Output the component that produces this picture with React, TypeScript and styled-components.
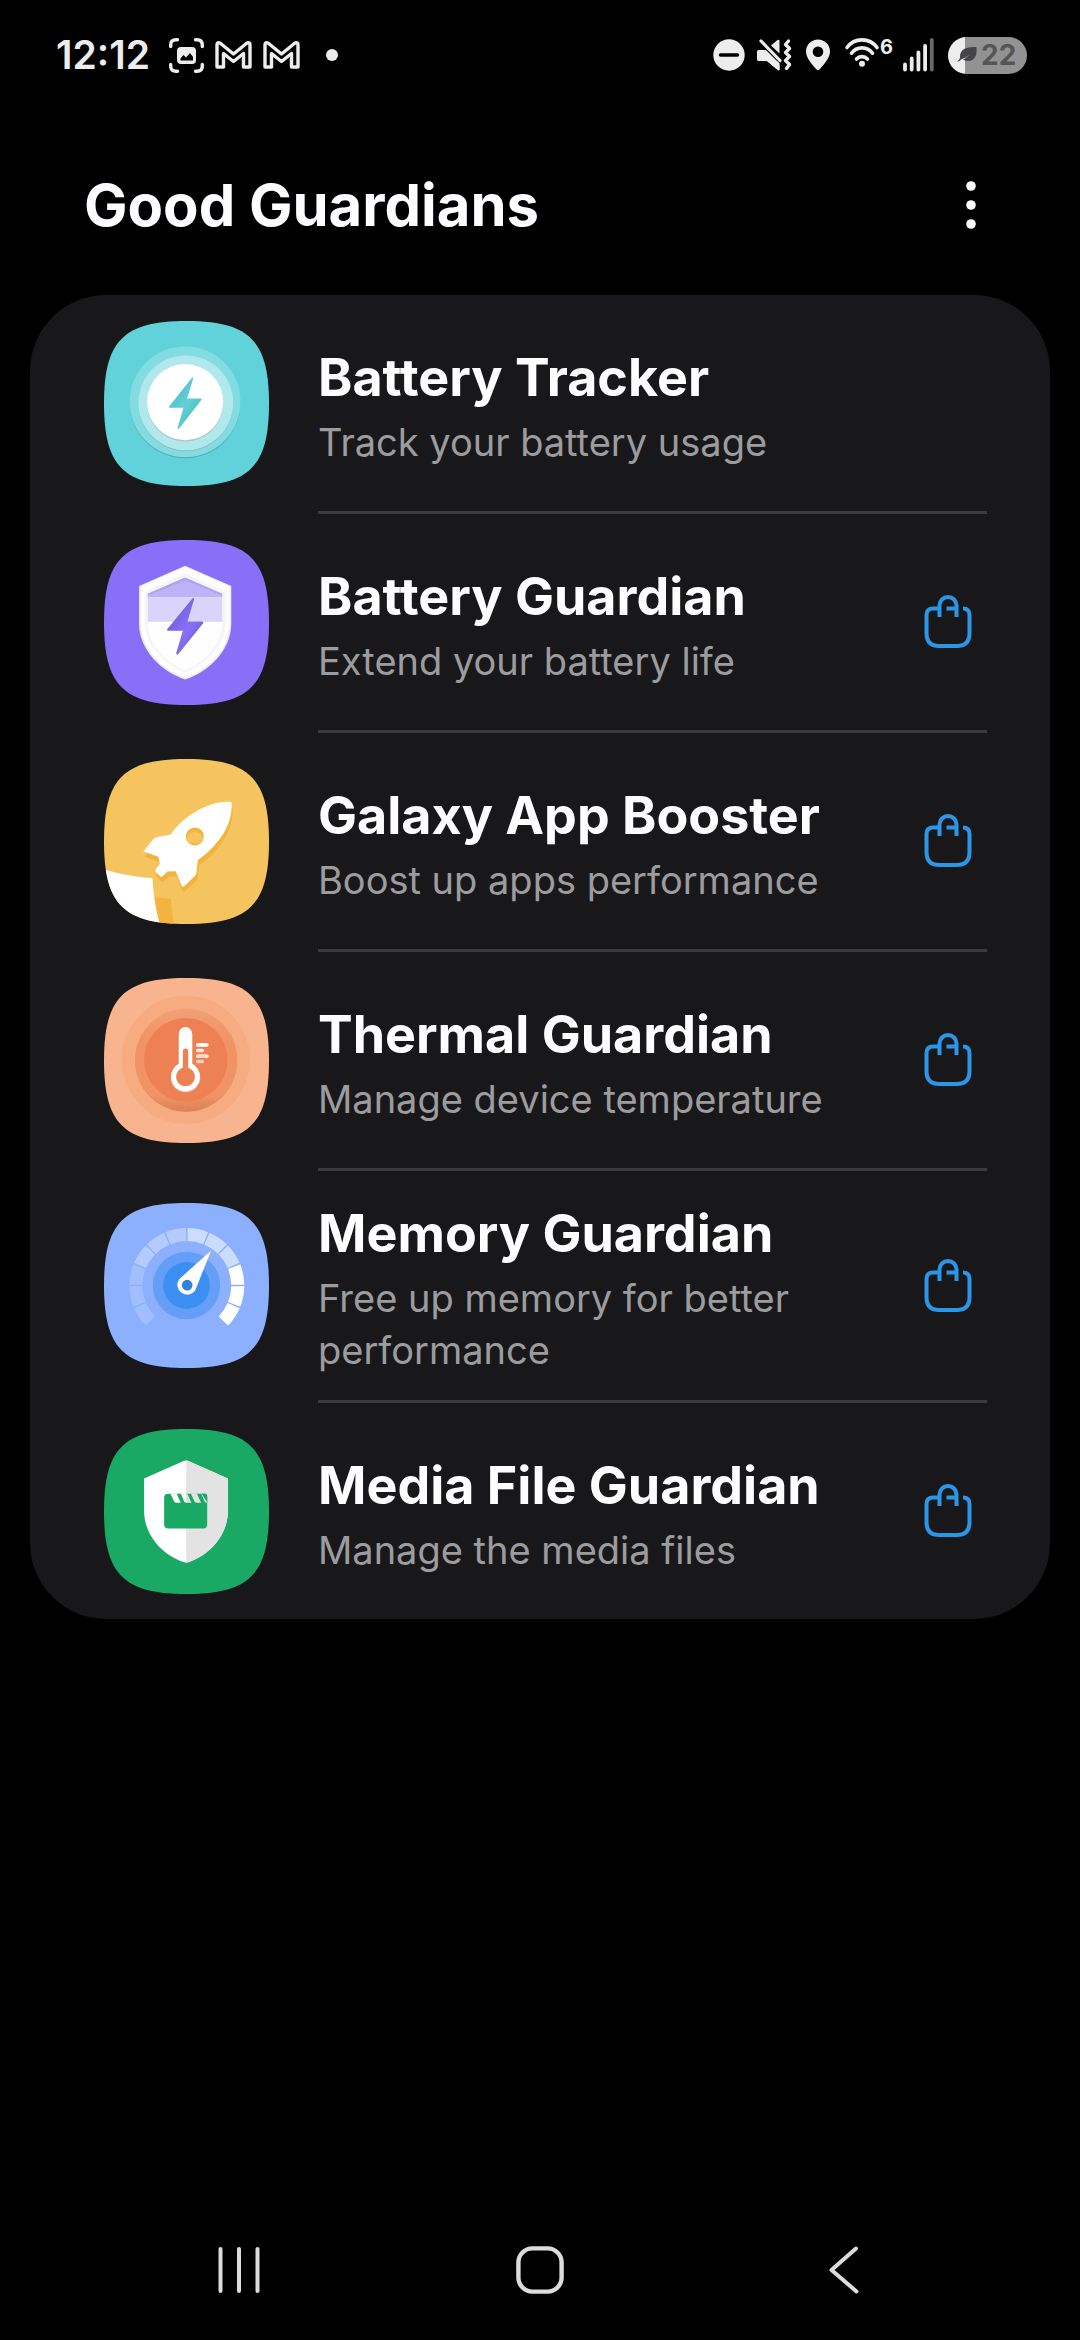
import React from "react";
import styled, { createGlobalStyle } from "styled-components";

const GlobalStyle = createGlobalStyle`
  *, *::before, *::after { box-sizing: border-box; }
  body {
    margin: 0;
    background: #000;
    color: #fdfdff;
    font-family: Inter, "Liberation Sans", sans-serif;
  }
`;

const Page = styled.div`
  min-height: 100vh;
  display: flex;
  flex-direction: column;
`;

const StatusBar = styled.div`
  height: 115px;
  padding: 0 53px 5px 56px;
  display: flex;
  align-items: center;
  justify-content: space-between;
  color: #ededed;
`;

const StatusGroup = styled.div<{ $gap: number }>`
  display: flex;
  align-items: center;
  gap: ${(p) => p.$gap}px;
`;

const Clock = styled.time`
  margin-right: 8px;
  font-size: 39px;
  line-height: 46px;
  font-weight: 600;
`;

const Glyph = styled.svg`
  display: block;
  flex: none;
  overflow: visible;
`;

const Dot = styled.span`
  width: 12px;
  height: 12px;
  margin-left: 15px;
  border-radius: 50%;
  background: currentColor;
`;

const Wifi = styled.div`
  width: 47px;
  height: 36px;
  display: flex;
  align-items: flex-start;
  gap: 2px;
`;

const WifiVersion = styled.span`
  font-size: 20px;
  line-height: 20px;
  font-weight: 700;
`;

const Battery = styled.div`
  width: 79px;
  height: 37px;
  padding-left: 9px;
  display: flex;
  align-items: center;
  gap: 4px;
  border-radius: 19px;
  background: linear-gradient(to right, #ededed 17px, #929292 17px);
  color: #555557;
  font-size: 28px;
  line-height: 37px;
  font-weight: 700;
`;

const Header = styled.header`
  height: 180px;
  padding: 0 70px 0 84px;
  display: flex;
  align-items: center;
  justify-content: space-between;
`;

const Heading = styled.h1`
  margin: 0;
  font-size: 58px;
  line-height: 78px;
  font-weight: 700;
`;

const IconButton = styled.button<{ $width: number }>`
  width: ${(p) => p.$width}px;
  height: 78px;
  padding: 0;
  flex: none;
  display: flex;
  align-items: center;
  justify-content: center;
  border: 0;
  background: none;
  color: inherit;
  cursor: pointer;
`;

const Main = styled.main`
  flex: 1;
  padding: 0 30px;
`;

const Card = styled.ul`
  margin: 0;
  padding: 0;
  list-style: none;
  border-radius: 76px;
  background: #18181a;
`;

const Row = styled.li`
  display: flex;
  align-items: stretch;
  gap: 49px;
  padding: 0 63px 0 74px;
`;

const RowIcon = styled.div<{ $last: boolean }>`
  width: 165px;
  flex: none;
  display: flex;
  align-items: center;
  padding-bottom: ${(p) => (p.$last ? 0 : 3)}px;
`;

const RowBody = styled.div<{ $last: boolean }>`
  flex: 1;
  min-width: 0;
  min-height: ${(p) => (p.$last ? 216 : 219)}px;
  display: flex;
  align-items: center;
  border-bottom: ${(p) => (p.$last ? "0" : "3px solid #3b3b3d")};
`;

const RowText = styled.div`
  flex: 1;
  min-width: 0;
  padding: 25px 0 24px;
`;

const RowTitle = styled.h2`
  margin: 0;
  font-size: 52px;
  line-height: 76px;
  font-weight: 700;
`;

const RowDetail = styled.p`
  margin: 0;
  font-size: 38px;
  line-height: 52px;
  color: #9c9c9e;
`;

const NavBar = styled.nav`
  height: 140px;
  padding: 0 88px;
  display: grid;
  grid-template-columns: repeat(3, 1fr);
  justify-items: center;
  align-items: center;
  color: #dcdcdc;
`;

/* Rounded app tile; children are drawn in a 494-unit square whose origin is (42, top). */
function Tile({ id, top, fill, children }: { id: string; top: number; fill: string; children: React.ReactNode }) {
  const d = `M42 ${top + 247}c0-188 59-247 247-247s247 59 247 247-59 247-247 247-247-59-247-247z`;
  return (
    <Glyph width="165" height="165" viewBox={`42 ${top} 494 494`} aria-hidden="true">
      <defs>
        <clipPath id={`${id}-clip`}>
          <path d={d} />
        </clipPath>
      </defs>
      <path d={d} fill={fill} />
      <g clipPath={`url(#${id}-clip)`}>{children}</g>
    </Glyph>
  );
}

const TrackerIcon = () => (
  <Tile id="tracker" top={31} fill="#61d2da">
    <defs>
      <linearGradient id="tracker-bolt" x1="0" y1="0" x2="1" y2="1">
        <stop offset="0" stopColor="#43b3bd" />
        <stop offset=".5" stopColor="#63d0d6" />
        <stop offset="1" stopColor="#45b4bc" />
      </linearGradient>
    </defs>
    <circle cx="285" cy="277" r="165" fill="#52a9b0" />
    <circle cx="285" cy="273" r="166" fill="#83dce2" />
    <circle cx="287" cy="279" r="142" fill="#86b9bd" opacity=".8" />
    <circle cx="287" cy="276" r="142" fill="#b1e8eb" />
    <circle cx="285" cy="278" r="114" fill="#a9c8ca" />
    <circle cx="285" cy="274" r="114" fill="#fff" />
    <path d="M306 200L237 287q-2 4 3 4h40l-18 60q1 5 5 2l67-86q1-4-3-4h-40l18-60q-1-5-3-3z" fill="url(#tracker-bolt)" />
  </Tile>
);

const BatteryShieldIcon = () => (
  <Tile id="battery" top={43} fill="#8770f7">
    <defs>
      <linearGradient id="battery-bolt" x1="0" y1="0" x2="1" y2="1">
        <stop offset="0" stopColor="#6a56cc" />
        <stop offset=".55" stopColor="#8770f7" />
        <stop offset="1" stopColor="#6653c0" />
      </linearGradient>
      <filter id="battery-soft" x="-20%" y="-20%" width="140%" height="140%">
        <feGaussianBlur stdDeviation="5" />
      </filter>
    </defs>
    <path d="M285 120l138 61v113c0 80-70 145-138 167-68-22-138-87-138-167V181z" fill="#eeeef0" />
    <path d="M285 123l133 60v110c0 76-66 140-133 162-67-22-133-86-133-162V183z" fill="#fff" />
    <path d="M285 150l115 52v92c0 64-62 118-115 140-53-22-115-76-115-140v-92z" fill="none" stroke="#e4e4e8" strokeWidth="5" filter="url(#battery-soft)" />
    <path d="M285 155l111 49v90c0 66-60 118-111 140-51-22-112-74-112-140v-90z" fill="#fefefe" />
    <path d="M285 155l111 49v11H173v-11z" fill="#beb2f8" />
    <path d="M285 155l111 49v5l-111-45-112 45v-5z" fill="#a698e4" opacity=".6" />
    <path d="M173 215h223v73H173z" fill="#dad3fc" />
    <path d="M308 217L231 310q-2 5 4 5h43l-20 67q1 6 6 3l75-93q2-5-4-5h-43l20-67q-1-5-4-3z" fill="url(#battery-bolt)" />
  </Tile>
);

const rocket = "M424 169c-60-9-145 41-182 97l-43 8c-7 2-10 6-13 10l-26 33 45 16 4 21-12 16c-2 4-1 6 2 9l10 11c3 3 6 3 9 0l14-13 25-1 17 43c2 4 6 4 9 1l31-30c4-4 5-8 5-13l4-34c60-43 106-104 101-174z";

const RocketIcon = () => (
  <Tile id="rocket" top={40} fill="#f5c45e">
    <path d="M190 453l52 6 10 90h-50z" fill="#f2b43f" />
    <path d="M40 370q70 21 147 27 4 75 25 150H40z" fill="#fff" />
    <path d={rocket} fill="#f2b43f" transform="translate(3 16)" />
    <path d={rocket} fill="#fff" />
    <circle cx="314" cy="272" r="27" fill="#f2b43f" />
    <path d="M288 278a27 27 0 0152 0 27 21 0 01-52 0z" fill="#f5c45e" />
  </Tile>
);

const ThermalIcon = () => (
  <Tile id="thermal" top={38} fill="#f8b48e">
    <defs>
      <linearGradient id="thermal-ring" x1="0" y1="0" x2="0" y2="1">
        <stop offset="0" stopColor="#f3a077" />
        <stop offset=".3" stopColor="#f19365" />
        <stop offset=".85" stopColor="#f19365" />
        <stop offset="1" stopColor="#dc8258" />
      </linearGradient>
    </defs>
    <circle cx="287" cy="283" r="192" fill="#f6ab80" />
    <circle cx="288" cy="287" r="152" fill="#d98a62" />
    <circle cx="288" cy="283" r="153" fill="url(#thermal-ring)" />
    <circle cx="287" cy="283" r="125" fill="#ee8153" />
    <path d="M266 207a20 20 0 0140 0v90a44 44 0 11-40 0z" fill="#e3dcd9" />
    <path d="M266 205a20 20 0 0140 0v90a43 43 0 11-40 0z" fill="#fff" />
    <path d="M278 257a8 8 0 0116 0v50a28 28 0 11-16 0z" fill="#ee8153" />
    <g fill="none" stroke="#fff" strokeWidth="11" strokeLinecap="round">
      <path d="M323 238h27" />
      <path d="M323 255h13" opacity=".85" />
      <path d="M323 272h27" opacity=".75" />
      <path d="M323 288h13" opacity=".6" />
    </g>
  </Tile>
);

const gaugeColors = ["#a2bffd", "#b4ccfd", "#cbdcfe", "#ffffff"];
const gaugePoint = (r: number, deg: number) => {
  const a = (deg * Math.PI) / 180;
  return `${(290 + r * Math.cos(a)).toFixed(1)} ${(285 + r * Math.sin(a)).toFixed(1)}`;
};
const gaugeSegments = Array.from({ length: 12 }, (_, i) => {
  const from = 135 + i * 22.5 + 0.8;
  const to = 135 + (i + 1) * 22.5 - 0.8;
  return {
    fill: gaugeColors[Math.floor(i / 3)],
    d: `M${gaugePoint(172, from)}A172 172 0 0 1 ${gaugePoint(172, to)}L${gaugePoint(133, to)}A133 133 0 0 0 ${gaugePoint(133, from)}z`,
  };
});

const MemoryIcon = () => (
  <Tile id="memory" top={38} fill="#8cb0fd">
    {gaugeSegments.map((s) => (
      <path key={s.d} d={s.d} fill={s.fill} />
    ))}
    <circle cx="289" cy="285" r="101" fill="#659ef6" />
    <circle cx="289" cy="285" r="70" fill="#3b8ff2" />
    <path d="M363 180L267 266a29 29 0 1048 34z" fill="#fff" />
    <circle cx="291" cy="284" r="16" fill="#3182da" />
  </Tile>
);

const MediaIcon = () => (
  <Tile id="media" top={41} fill="#1aa965">
    <path d="M282 136q6-2 11 0l120 53v97c0 80-64 136-119 154q-6 2-12 0c-56-18-120-74-120-154v-97z" fill="#fff" />
    <path d="M288 135l5 1 120 53v97c0 80-64 136-119 154l-6 1z" fill="#e3e3e3" />
    <rect x="222" y="235" width="129" height="104" rx="12" fill="#1aa965" />
    <path d="M241 234h18l13 28h-13q-5 0-7-4z" fill="#fff" />
    <path d="M272 234h16v28q-4 0-6-4z" fill="#fff" />
    <path d="M288 234h4l13 28h-17zM303 234h18l13 28h-13q-5 0-7-4zM334 234h6l11 6v22q-5 0-7-4z" fill="#e3e3e3" transform="translate(-1 0)" />
    <path d="M334 234h9q8 0 8 8v18z" fill="#1aa965" />
  </Tile>
);

const BagIcon = () => (
  <Glyph width="48" height="54" viewBox="0 0 48 54" fill="none" stroke="#2b95e6" strokeWidth="4" strokeLinejoin="round" aria-hidden="true">
    <path d="M15.500 22V10.500a8.500 8.500 0 0117 0V22M17 13.500H9q-6.500 0-6.500 6.500V38Q2.500 51 15 51H33Q45.500 51 45.500 38V20Q45.500 13.500 39 13.500M22.500 13.500h10" />
  </Glyph>
);

const MailIcon = () => (
  <Glyph width="37" height="28" viewBox="0 0 37 28" fill="none" stroke="currentColor" strokeWidth="3.400" strokeLinejoin="round" aria-hidden="true">
    <path d="M2 26V4q0-3 3-2l13.500 11L32 2q3-1 3 2v22h-6.500V12.500l-10 8-10-8V26z" />
  </Glyph>
);

const apps = [
  { name: "Battery Tracker", detail: "Track your battery usage", Icon: TrackerIcon, store: false },
  { name: "Battery Guardian", detail: "Extend your battery life", Icon: BatteryShieldIcon, store: true },
  { name: "Galaxy App Booster", detail: "Boost up apps performance", Icon: RocketIcon, store: true },
  { name: "Thermal Guardian", detail: "Manage device temperature", Icon: ThermalIcon, store: true },
  { name: "Memory Guardian", detail: "Free up memory for better performance", Icon: MemoryIcon, store: true },
  { name: "Media File Guardian", detail: "Manage the media files", Icon: MediaIcon, store: true },
];

export default function App() {
  return (
    <Page>
      <GlobalStyle />
      <StatusBar>
        <StatusGroup $gap={11}>
          <Clock>12:12</Clock>
          <Glyph width="35" height="35" viewBox="0 0 35 35" fill="none" stroke="currentColor" strokeWidth="3.400" strokeLinecap="round" aria-hidden="true">
            <path d="M1.700 8.500V7q0-5.300 5.300-5.300h1.500M26.500 1.700H28q5.300 0 5.300 5.300v1.500M33.300 26.500V28q0 5.300-5.300 5.300h-1.500M8.500 33.300H7q-5.300 0-5.300-5.300v-1.500" />
            <rect x="8" y="9" width="19" height="17" rx="4" fill="currentColor" stroke="none" />
            <path d="M11.500 22.500v-2l3-3.500 2.500 2.500 4-4.500 3 4v3.500z" fill="#000" stroke="none" />
          </Glyph>
          <MailIcon />
          <MailIcon />
          <Dot />
        </StatusGroup>
        <StatusGroup $gap={12}>
          <Glyph width="32" height="32" viewBox="0 0 32 32" aria-hidden="true">
            <circle cx="16" cy="16" r="15.700" fill="currentColor" />
            <path d="M7.500 16h17" stroke="#000" strokeWidth="3.400" strokeLinecap="round" />
          </Glyph>
          <Glyph width="37" height="32" viewBox="0 0 37 32" fill="currentColor" aria-hidden="true">
            <path d="M2.500 11H9L22.500 24v6q0 2-1.700 1L10 22H2.500Q0 22 0 19.500v-6Q0 11 2.500 11zM14 6.500L20.500 1q2-1 2 1v12.500z" />
            <path d="M4 2.500l21 21" stroke="#000" strokeWidth="7" />
            <path d="M2.500 11H9L19 21l3.500 3v6q0 2-1.700 1L10 22H2.500Q0 22 0 19.500v-6Q0 11 2.500 11z" />
            <path d="M4 2l19 19.500" stroke="currentColor" strokeWidth="3.200" strokeLinecap="round" />
            <path d="M31.500 2l-3 3.500 4 4-4 4 4 4-4 4 4 4-3 4" fill="none" stroke="currentColor" strokeWidth="3.400" strokeLinecap="round" strokeLinejoin="round" />
          </Glyph>
          <Glyph width="26" height="32" viewBox="0 0 26 32" aria-hidden="true">
            <path d="M12 .5a12 12 0 0112 12c0 6.500-6 13-10.500 18q-1.500 1.300-3 0C6 25.500 0 19 0 12.500a12 12 0 0112-12zm0 7a5.300 5.300 0 100 10.600 5.300 5.300 0 000-10.600z" fill="currentColor" fillRule="evenodd" />
          </Glyph>
          <Wifi>
            <Glyph width="34" height="32" viewBox="0 0 34 32" fill="none" stroke="currentColor" strokeWidth="3.600" strokeLinecap="round" aria-hidden="true">
              <path d="M3 10.500a18.500 18.500 0 0130 0M7.500 16.200a13 13 0 0121 0M12.500 22a7.500 7.500 0 0111 0" />
              <circle cx="18" cy="26.700" r="3" fill="currentColor" stroke="none" />
            </Glyph>
            <WifiVersion>6</WifiVersion>
          </Wifi>
          <Glyph width="33" height="34" viewBox="0 0 33 34" fill="none" stroke="currentColor" strokeWidth="3.800" strokeLinecap="round" aria-hidden="true">
            <path d="M2 26.500V31.500M8.700 20.500v11M15.400 14.500v17M22.100 8v23.500" />
            <path d="M28.800 2v29.500" stroke="#686868" />
          </Glyph>
          <Battery>
            <Glyph width="20" height="16" viewBox="0 0 20 16" aria-hidden="true">
              <path d="M19.500 0q1 9-3.500 12.500Q11.500 15.500 6 12.500q4-1.500 6.500-5Q8 11 4 12.500 2.500 15 0 14.500q2-1 3-3.500Q2.500 4 8 1.500 12-.5 19.500 0z" fill="#454547" />
            </Glyph>
            22
          </Battery>
        </StatusGroup>
      </StatusBar>

      <Header>
        <Heading>Good Guardians</Heading>
        <IconButton type="button" $width={78} aria-label="More options">
          <Glyph width="10" height="48" viewBox="0 0 10 48" fill="#fdfdff" aria-hidden="true">
            <circle cx="5" cy="5" r="4.800" />
            <circle cx="5" cy="24" r="4.800" />
            <circle cx="5" cy="43" r="4.800" />
          </Glyph>
        </IconButton>
      </Header>

      <Main>
        <Card>
          {apps.map(({ name, detail, Icon, store }, i) => (
            <Row key={name}>
              <RowIcon $last={i === apps.length - 1}>
                <Icon />
              </RowIcon>
              <RowBody $last={i === apps.length - 1}>
                <RowText>
                  <RowTitle>{name}</RowTitle>
                  <RowDetail>{detail}</RowDetail>
                </RowText>
                {store && (
                  <IconButton type="button" $width={78} aria-label={`Get ${name}`}>
                    <BagIcon />
                  </IconButton>
                )}
              </RowBody>
            </Row>
          ))}
        </Card>
      </Main>

      <NavBar aria-label="System navigation">
        <IconButton type="button" $width={120} aria-label="Recent apps">
          <Glyph width="42" height="48" viewBox="0 0 42 48" fill="none" stroke="currentColor" strokeWidth="4" strokeLinecap="round" aria-hidden="true">
            <path d="M2.500 3v42M21 3v42M39.500 3v42" />
          </Glyph>
        </IconButton>
        <IconButton type="button" $width={120} aria-label="Home">
          <Glyph width="48" height="48" viewBox="0 0 48 48" fill="none" stroke="currentColor" strokeWidth="4.400" aria-hidden="true">
            <rect x="2.400" y="2.400" width="43.200" height="43.200" rx="14" />
          </Glyph>
        </IconButton>
        <IconButton type="button" $width={120} aria-label="Back">
          <Glyph width="30" height="48" viewBox="0 0 30 48" fill="none" stroke="currentColor" strokeWidth="4" strokeLinecap="round" strokeLinejoin="round" aria-hidden="true">
            <path d="M30 2.500L5.500 24l25 21.500" />
          </Glyph>
        </IconButton>
      </NavBar>
    </Page>
  );
}
